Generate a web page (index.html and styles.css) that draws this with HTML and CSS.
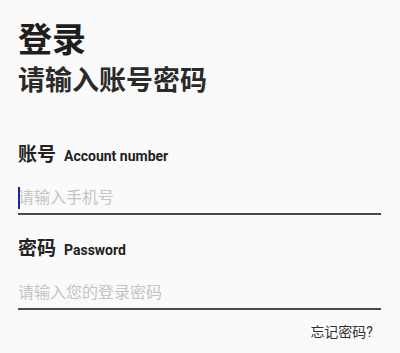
FILE: index.html
```html
<!DOCTYPE html>
<html lang="zh">
<head>
<meta charset="utf-8">
<link rel="stylesheet" href="styles.css">
</head>
<body>
<div class="page">
  <h1 class="title">登录</h1>
  <h2 class="subtitle">请输入账号密码</h2>

  <div class="field field-account">
    <div class="label"><span class="label-cn">账号</span><span class="label-en">Account number</span></div>
    <div class="input">
      <span class="caret"></span>
      <span class="placeholder">请输入手机号</span>
    </div>
  </div>

  <div class="field field-password">
    <div class="label"><span class="label-cn">密码</span><span class="label-en">Password</span></div>
    <div class="input">
      <span class="placeholder">请输入您的登录密码</span>
    </div>
  </div>

  <div class="forgot-row"><span class="forgot">忘记密码?</span></div>
</div>
</body>
</html>
```

FILE: styles.css
```css
html, body {
  margin: 0;
  padding: 0;
  background: #fafafa;
}
body {
  font-family: Roboto, "Noto Sans CJK SC", sans-serif;
  color: #222;
}
.page {
  padding: 19px 19px 0 18px;
  display: flex;
  flex-direction: column;
}
.title {
  margin: 0;
  font-size: 34px;
  line-height: 42px;
  font-weight: 700;
  color: #1e1e1e;
}
.subtitle {
  margin: 2.5px 0 0;
  font-size: 27px;
  line-height: 34px;
  font-weight: 700;
  color: #2a2a2a;
}
.field-account {
  margin-top: 43px;
}
.field-password {
  margin-top: 20px;
}
.label {
  display: flex;
  align-items: baseline;
  gap: 8px;
  line-height: 28px;
}
.label-cn {
  font-size: 19px;
  font-weight: 700;
  color: #222;
}
.label-en {
  font-size: 14px;
  font-weight: 700;
  color: #222;
}
.input {
  position: relative;
  margin-top: 17px;
  padding-bottom: 4px;
  border-bottom: 2px solid #4a4a4a;
  font-size: 16px;
  line-height: 22px;
}
.field-password .input {
  margin-top: 18.5px;
}
.placeholder {
  color: #c4c4c4;
}
.caret {
  position: absolute;
  left: 0;
  top: 0;
  width: 2px;
  height: 22px;
  background: #1a2a9a;
}
.forgot-row {
  display: flex;
  justify-content: flex-end;
  margin-top: 12px;
  padding-right: 8px;
}
.forgot {
  font-size: 14px;
  line-height: 20px;
  color: #333;
}
```
